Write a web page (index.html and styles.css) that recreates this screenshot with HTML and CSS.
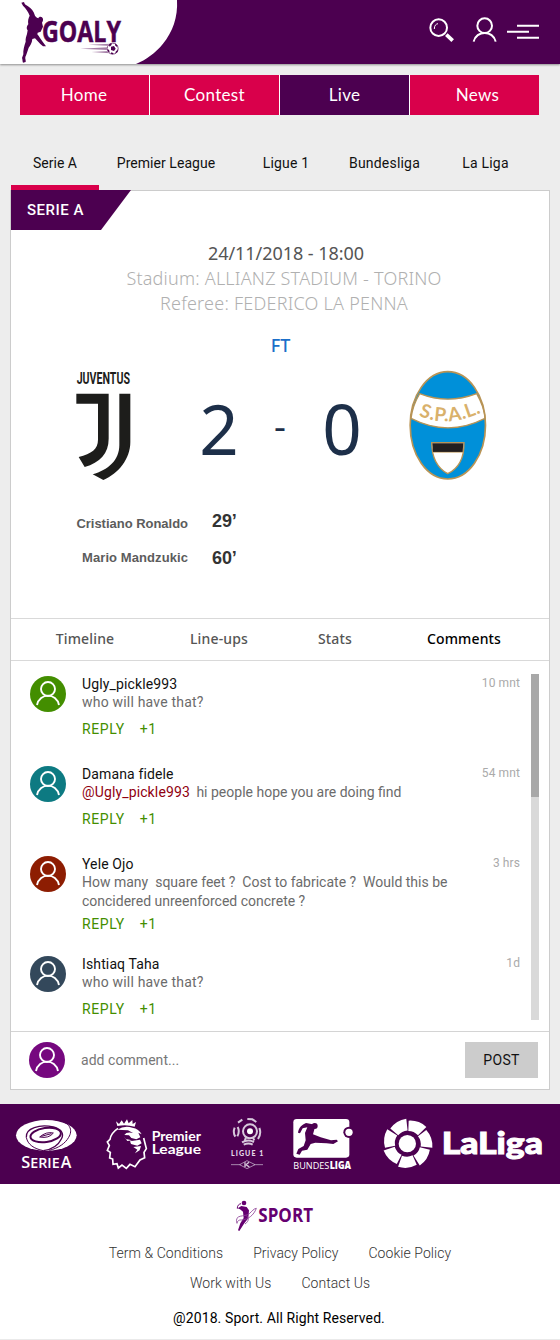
FILE: index.html
```html
<!DOCTYPE html>
<html lang="en">
<head>
<meta charset="utf-8">
<title>Goaly - Live</title>
<link rel="stylesheet" href="styles.css">
</head>
<body>
<svg class="defs" width="0" height="0" aria-hidden="true">
  <symbol id="person" viewBox="0 0 36 36">
    <g fill="none" stroke="#fff" stroke-width="1.9"><circle cx="18" cy="13" r="7"/><path d="M7 29C9.500 16.500 26.500 16.500 29 29"/></g>
  </symbol>
</svg>
<header class="header">
  <svg class="brand" viewBox="0 0 540 192" width="180" height="64">
    <path fill="#fff" d="M0 0H531C534 52 518 96 489 131C466 159 438 179 408 192H0Z"/>
    <g fill="#4c0050">
      <path d="M64 8L72 6C73 12 77 15 84 19C94 25 101 34 105 47C108 51 112 54 115 55C117 49 124 49 128 54C131 60 128 64 126 68L129 80L122 95L113 98L112 103C118 110 122 118 128 125L138 139L129 139L121 132L105 115L97 117C96 129 91 137 86 143C82 154 80 163 76 171C75 177 78 181 77 186L69 188C67 183 68 178 66 174L70 163C69 151 73 137 77 125C76 116 79 109 81 102L83 91C78 85 81 77 85 73C83 62 85 55 89 47C85 36 78 25 69 17Z"/>
      <text class="goaly" x="126" y="127" font-size="83" textLength="237" lengthAdjust="spacingAndGlyphs">GOALY</text>
      <g opacity=".5"><path d="M266 134L334 131V138Z"/><path d="M241 146L324 142V150Z"/><path d="M275 156L330 153V160Z"/></g>
      <circle cx="338" cy="146" r="18" fill="#fff"/>
      <circle cx="338" cy="146" r="16.500" fill="none" stroke="#4c0050" stroke-width="2"/>
      <path d="M333 140L342 138L347 146L342 153L333 150Z"/><path d="M326 134L334 129L335 134L329 140ZM346 130L353 137L351 141L345 136ZM322 148L327 149L329 157L325 156ZM354 148L353 156L346 161L347 155ZM334 157L341 160L338 163L332 161Z"/>
    </g>
  </svg>
  <div class="tools">
    <svg width="24" height="26" viewBox="85 52 72 78" fill="none" stroke="#fff"><circle cx="114" cy="84" r="25" stroke-width="6"/><path d="M137 105L156 123" stroke-width="11"/><path d="M101 88C101 77 106 73 112 72" stroke-width="3"/></svg>
    <svg width="26" height="26" viewBox="217 52 78 78" fill="none" stroke="#fff" stroke-width="6"><circle cx="255" cy="78" r="22"/><path d="M222 126C229 91 281 91 288 126"/></svg>
    <svg width="32" height="26" viewBox="321 52 96 78" fill="#fff"><path d="M351 75h66v6h-66zM321 93h66v6h-66zM351 111h66v6h-66z"/></svg>
  </div>
</header>
<nav class="main-nav"><a class="n1">Home</a><a class="n2">Contest</a><a class="n3 active">Live</a><a class="n4">News</a></nav>
<nav class="leagues"><a class="active">Serie A</a><a class="tight">Premier League</a><a>Ligue 1</a><a>Bundesliga</a><a>La Liga</a></nav>
<main class="card">
  <h1 class="tag">SERIE A</h1>
  <section class="match">
    <p class="date">24/11/2018 - 18:00</p>
    <p class="stadium">Stadium: ALLIANZ STADIUM - TORINO</p>
    <p class="referee">Referee: FEDERICO LA PENNA</p>
    <p class="status">FT</p>
    <div class="scoreboard">
      <svg width="58" height="114" viewBox="46 30 174 342" fill="#1d1d1b">
        <text class="juve" x="51" y="73" font-size="48" textLength="160" lengthAdjust="spacingAndGlyphs">JUVENTUS</text>
        <path d="M50 101H147V236C147 281 121 307 75 321L57 291C96 281 115 267 115 239V131H50Z"/>
        <path d="M179 101H212V247C212 296 176 342 131 360L99 343C145 330 179 301 179 255Z"/>
      </svg>
      <span class="score home">2</span><span class="dash">-</span><span class="score away">0</span>
      <svg class="spal" width="78" height="112" viewBox="478 120 234 336">
        <ellipse cx="594.500" cy="286" rx="113" ry="161" fill="#0090d9"/>
        <path d="M510 191Q594 224 681 191Q704 231 706 265Q595 322 484 265Q489 226 510 191Z" fill="#fff" stroke="#b99455" stroke-width="4"/>
        <path id="spalArc" fill="none" d="M507 257Q596 297 706 243"/>
        <text class="spal-name" font-size="57"><textPath href="#spalArc" textLength="194" lengthAdjust="spacing">S.P.A.L.</textPath></text>
        <path d="M546 338H643Q644 407 594 431Q547 405 546 338Z" fill="#fff" stroke="#b99455" stroke-width="4"/>
        <path d="M548 340H641L639 366H550Z" fill="#231f20"/><path d="M549 367H640" stroke="#b99455" stroke-width="2"/>
        <ellipse cx="594.500" cy="286" rx="113" ry="161" fill="none" stroke="#b99455" stroke-width="5"/>
      </svg>
    </div>
    <ul class="goals"><li><span>Cristiano Ronaldo</span><b>29’</b></li><li><span>Mario Mandzukic</span><b>60’</b></li></ul>
  </section>
  <nav class="tabs"><a>Timeline</a><a>Line-ups</a><a>Stats</a><a class="active">Comments</a></nav>
  <section class="comments">
    <div class="list">
      <article class="comment"><svg class="avatar green"><use href="#person"/></svg><div class="content"><h2>Ugly_pickle993</h2><p>who will have that?</p><div class="actions"><a>REPLY</a><a>+1</a></div></div><time>10 mnt</time></article>
      <article class="comment"><svg class="avatar teal"><use href="#person"/></svg><div class="content"><h2>Damana fidele</h2><p class="tight"><span class="mention">@Ugly_pickle993</span> hi people hope you are doing find</p><div class="actions"><a>REPLY</a><a>+1</a></div></div><time>54 mnt</time></article>
      <article class="comment long"><svg class="avatar red"><use href="#person"/></svg><div class="content"><h2>Yele Ojo</h2><p class="tight">How many&nbsp; square feet ?&nbsp; Cost to fabricate ?&nbsp; Would this be<br>concidered unreenforced concrete ?</p><div class="actions"><a>REPLY</a><a>+1</a></div></div><time>3 hrs</time></article>
      <article class="comment"><svg class="avatar slate"><use href="#person"/></svg><div class="content"><h2>Ishtiaq Taha</h2><p>who will have that?</p><div class="actions"><a>REPLY</a><a>+1</a></div></div><time>1d</time></article>
    </div>
    <div class="scrollbar"><div class="thumb"></div></div>
  </section>
  <div class="add"><svg class="avatar purple"><use href="#person"/></svg><span class="placeholder">add comment...</span><button>POST</button></div>
</main>
<section class="partners">
  <svg width="66" height="80" viewBox="42 12 198 240" fill="#fff">
    <ellipse cx="139" cy="106" rx="91" ry="46"/>
    <g fill="none" stroke="#4c0050"><ellipse cx="137" cy="105" rx="46" ry="21" stroke-width="6" transform="rotate(-8 137 105)"/><path d="M79 112C76 84 119 72 160 81C188 89 192 103 184 117C175 136 158 148 130 152" stroke-width="4"/><path d="M164 59C213 65 219 91 206 112C196 130 176 144 148 151" stroke-width="3"/><path d="M79 112C83 134 102 146 130 152" stroke-width="3"/><path d="M119 111Q139 94 160 99Q147 116 119 111" stroke-width="3"/><path d="M124 109L154 101" stroke-width="3"/></g>
    <text class="serie" y="204"><tspan x="64" font-size="49">S</tspan><tspan font-size="43" textLength="88" lengthAdjust="spacingAndGlyphs">ERIE</tspan><tspan x="182" font-size="48">A</tspan></text>
  </svg>
  <svg width="99" height="80" viewBox="315 12 297 240" fill="#fff">
    <path d="M352 78L348 64L357 72L365 61L372 71L381 58L386 70L397 60L398 72L408 66L404 80Q378 72 352 78Z"/>
    <path fill="none" stroke="#fff" stroke-width="5" d="M354 85Q333 99 330 118L322 126L328 137L322 151L331 157L329 174L338 177L339 193L351 191L355 204L366 195L379 205L390 193L405 200L420 180L434 173L432 157L439 146L431 114"/>
    <path d="M352 89Q373 76 397 83Q417 86 425 103L415 98L421 112L409 118L394 114L387 106L373 105Q379 95 399 99L384 91Q367 89 352 89ZM390 124L420 119L425 130L412 137L393 132ZM400 141L423 138L419 151L405 160L412 149ZM371 108L377 117L396 121L382 123Z"/>
    <text class="league" font-size="40"><tspan x="455" y="124" textLength="148" lengthAdjust="spacingAndGlyphs">Premier</tspan><tspan x="455" y="161" textLength="148" lengthAdjust="spacingAndGlyphs">League</tspan></text>
  </svg>
  <svg width="38" height="80" viewBox="687 12 114 240" fill="none" stroke="#d7c9dc" stroke-width="6">
    <circle cx="750" cy="94" r="21"/><circle cx="750" cy="94" r="9" fill="#fff" stroke="none"/><path d="M714 68L727 59M742 57L757 58L769 66M704 83Q698 98 706 110M713 81Q720 94 712 109M778 84Q785 101 774 117M726 127Q744 117 762 126M731 134Q746 127 758 134M738 112L734 123M758 111L763 121"/>
    <text class="ligue" x="693" y="167" font-size="21" textLength="97" lengthAdjust="spacing">LIGUE 1</text>
    <path d="M693 194H789" stroke-width="2"/><path d="M719 194L741 182L765 194L741 206Z" stroke-width="2" fill="#4c0050"/><path d="M735 187V201M738 194L747 187M738 194L748 201" stroke-width="4"/>
  </svg>
  <svg width="63" height="80" viewBox="36 12 189 240" fill="#fff">
    <rect x="40" y="57" width="168" height="116" rx="10"/>
    <g fill="#4c0050"><circle cx="207" cy="97" r="17"/><circle cx="104" cy="78" r="9"/><path d="M54 98C56 83 66 74 78 69L98 73L104 85L99 103L122 112L153 121L170 119L174 124L160 132L140 130L106 128L92 132L82 149L66 152L59 164L49 161L55 147L71 138L77 121L75 99L82 82L68 85L60 100Z"/></g>
    <circle cx="207" cy="97" r="11"/>
    <text class="bundes" x="40" y="207" font-size="29" textLength="108" lengthAdjust="spacingAndGlyphs">BUNDES</text><text class="bundes bold" x="149" y="207" font-size="29" textLength="64" lengthAdjust="spacingAndGlyphs">LIGA</text>
  </svg>
  <svg width="165" height="80" viewBox="300 12 495 240" fill="#fff">
    <circle cx="382" cy="131" r="26"/>
    <g transform="translate(383 131)">
      <path id="panel" d="M2 -38L3 -69Q33 -71 56 -50L31 -25Q19 -38 2 -38Z"/>
      <use href="#panel" transform="rotate(51.430)"/><use href="#panel" transform="rotate(102.860)"/><use href="#panel" transform="rotate(154.290)"/><use href="#panel" transform="rotate(205.710)"/><use href="#panel" transform="rotate(257.140)"/><use href="#panel" transform="rotate(308.570)"/>
    </g>
    <text class="laliga" x="485" y="162" font-size="91" textLength="304" lengthAdjust="spacingAndGlyphs">LaLiga</text>
  </svg>
</section>
<footer class="footer">
  <svg width="80" height="34" viewBox="405 28 240 102" fill="#650070">
    <circle cx="432" cy="40" r="7"/><path d="M413 56L424 49L440 52L447 62L445 86L433 101L418 124L414 122L421 101L431 85L429 66L420 59Z"/>
    <path d="M411 101C402 72 434 83 448 72C457 64 461 57 469 56C462 76 444 90 425 91C414 90 412 96 411 101M435 103C449 93 446 84 438 77" fill="none" stroke="#8b4096" stroke-width="2.500"/><path d="M412 57C411 48 417 43 423 42" fill="none" stroke="#650070" stroke-width="3"/>
    <text class="sport" x="475" y="98" font-size="56" textLength="164" lengthAdjust="spacingAndGlyphs">SPORT</text>
  </svg>
  <div class="links first"><a>Term &amp; Conditions</a><a>Privacy Policy</a><a>Cookie Policy</a></div>
  <div class="links"><a>Work with Us</a><a>Contact Us</a></div>
  <p class="copyright">@2018. Sport. All Right Reserved.</p>
</footer>
</body>
</html>
```
FILE: styles.css
```css
* { box-sizing: border-box; }
body { margin: 0; width: 560px; height: 1340px; overflow: hidden; background: #ededed; color: #111; font-family: Roboto, sans-serif; font-size: 14px; letter-spacing: .2px; }
h1, h2, p, ul { margin: 0; padding: 0; font-weight: 400; }
svg { display: block; flex: none; overflow: visible; }
svg text { letter-spacing: 0; stroke: none; }
.defs { position: absolute; }
.header { height: 64px; display: flex; justify-content: space-between; background: #4c0050; box-shadow: 0 1px 2px rgba(0,0,0,.4); }
.tools { display: flex; padding: 17px 21px 0 0; }
.tools svg:nth-child(2) { margin: 0 9px 0 19px; }
.goaly, .sport { font-family: "Open Sans", sans-serif; font-weight: 700; }
svg .goaly { stroke: #4c0050; stroke-width: 1.5; }
.juve { font-family: Roboto, sans-serif; font-weight: 700; }
.main-nav { display: grid; grid-template-columns: repeat(4, 129px); gap: 1px; width: 519px; height: 40px; margin: 11px 0 0 20px; background: #fff; }
.main-nav a { background: #d9004b; color: #fff; font: 17px/39px Lato, sans-serif; letter-spacing: .3px; text-align: center; }
.main-nav .n1 { padding-right: 1px; }
.main-nav .n4 { padding-left: 6px; }
.main-nav .active { background: #4c0050; }
.leagues { display: grid; grid-template-columns: 88px 134px 106px 91px 111px; margin: 23px 0 0 11px; height: 52px; }
.leagues a { height: 52px; line-height: 50px; text-align: center; }
.leagues .active { border-bottom: 5px solid #d9004b; letter-spacing: 0; }
.leagues .tight { letter-spacing: .05px; }
.card { width: 540px; height: 900px; margin: 0 10px; background: #fff; border: 1px solid #ccc; }
.tag { width: 120px; height: 40px; margin-top: -1px; padding-left: 16px; line-height: 41px; background: #4c0050; color: #fff; clip-path: polygon(0 0, 100% 0, 90px 100%, 0 100%); font-size: 15px; font-weight: 500; letter-spacing: .5px; }
.match { height: 388px; padding-top: 11px; }
.date, .stadium, .referee, .status { text-align: center; font: 300 18px/25px "Noto Sans", sans-serif; letter-spacing: 0; color: #b0b0b0; }
.date { color: #555; font-weight: 400; padding-left: 12px; letter-spacing: -.05px; }
.stadium { padding: 0 0 0 8px; letter-spacing: .21px; }
.referee { padding-left: 8px; letter-spacing: .23px; }
.status { margin-top: 17px; padding-left: 1px; color: #1b6fc9; font-weight: 500; }
.scoreboard { display: flex; height: 117px; margin-top: 9px; padding: 3px 0 0 64px; }
.score { width: 42px; text-align: center; font: 69px/116px "Noto Sans", sans-serif; letter-spacing: 0; color: #1d2f49; }
.home { margin-left: 65px; }
.away { margin-left: 35px; }
.dash { width: 12px; margin-left: 34px; font: 37px/109px "Noto Sans", sans-serif; color: #1d2f49; letter-spacing: 0; }
.spal { margin: 0 0 0 46px; }
.goals { list-style: none; padding: 21px 0 0 59px; }
.goals li { display: flex; height: 37px; line-height: 37px; font-family: "Liberation Sans", Arial, sans-serif; }
.goals span { width: 118px; text-align: right; font-size: 13px; font-weight: 700; color: #5c5c5c; letter-spacing: -.02px; }
.goals li:nth-child(2) span { line-height: 31px; letter-spacing: .08px; }
.goals b { margin-left: 24px; font-size: 18px; line-height: 32px; color: #333; letter-spacing: -.1px; }
.tabs { display: grid; grid-template-columns: 148px 120px 112px 158px; height: 43px; border: solid #d9d9d9; border-width: 1px 0; text-align: center; font: 500 14px/40px "Noto Sans", sans-serif; letter-spacing: .15px; color: #555; }
.tabs .active { color: #000; padding-right: 12px; }
.comments { display: flex; justify-content: space-between; height: 370px; padding: 13px 10px 11px 19px; }
.list { width: 490px; padding-top: 2px; }
.comment { display: flex; height: 90px; }
.comment.long { height: 100px; }
.avatar { width: 36px; height: 36px; border-radius: 50%; }
.green { background: #438e00; }
.teal { background: #0d7a82; }
.red { background: #8d1d02; }
.slate { background: #33485b; }
.purple { background: #76087f; }
.content { flex: 1; margin-left: 16px; white-space: nowrap; }
.content h2 { font-size: 14px; line-height: 17px; color: #111; letter-spacing: .13px; }
.content p { line-height: 19px; color: #6b6b6b; }
.content .tight { letter-spacing: 0; }
.mention { color: #900010; margin-right: 3px; letter-spacing: .13px; }
.actions { display: flex; gap: 15px; margin-top: 8px; line-height: 19px; color: #438e00; letter-spacing: .6px; }
.long .actions { margin-top: 4px; }
time { font-size: 12px; line-height: 14px; color: #aaa; letter-spacing: .1px; }
.scrollbar { width: 8px; height: 346px; background: #d9d9d9; }
.thumb { height: 123px; background: #a8a8a8; }
.add { display: flex; height: 58px; border-top: 1px solid #d4d4d4; padding: 10px 11px 0 18px; }
.placeholder { flex: 1; padding-left: 16px; line-height: 36px; color: #777; letter-spacing: .05px; }
button { width: 73px; height: 36px; padding: 0; border: 0; background: #ccc; color: #111; font: 14px Roboto, sans-serif; letter-spacing: .3px; }
.partners { display: flex; gap: 25px; height: 80px; margin-top: 14px; padding-left: 14px; background: #4c0050; }
.serie { font-family: "Open Sans", sans-serif; font-weight: 600; }
.league { font-family: Lato, sans-serif; font-weight: 700; }
.ligue { font-family: Lato, sans-serif; font-weight: 900; fill: #e5dae8; }
.bundes { font-family: "Open Sans", sans-serif; }
.bold { font-weight: 800; }
svg .laliga { font-family: Lato, sans-serif; font-weight: 900; stroke: #fff; stroke-width: 3; }
.spal-name { font-family: Lato, sans-serif; font-weight: 700; fill: #d9b16b; }
.footer { height: 156px; padding-top: 15px; background: #fff; border-bottom: 1px solid #eaeaea; text-align: center; }
.footer svg { margin-left: 235px; }
.links { display: flex; justify-content: center; gap: 30px; height: 30px; line-height: 30px; font-weight: 300; color: #333; letter-spacing: .06px; }
.links.first { margin-top: 5px; }
.copyright { line-height: 20px; margin-top: 10px; color: #000; padding-right: 2px; letter-spacing: .1px; }
```
